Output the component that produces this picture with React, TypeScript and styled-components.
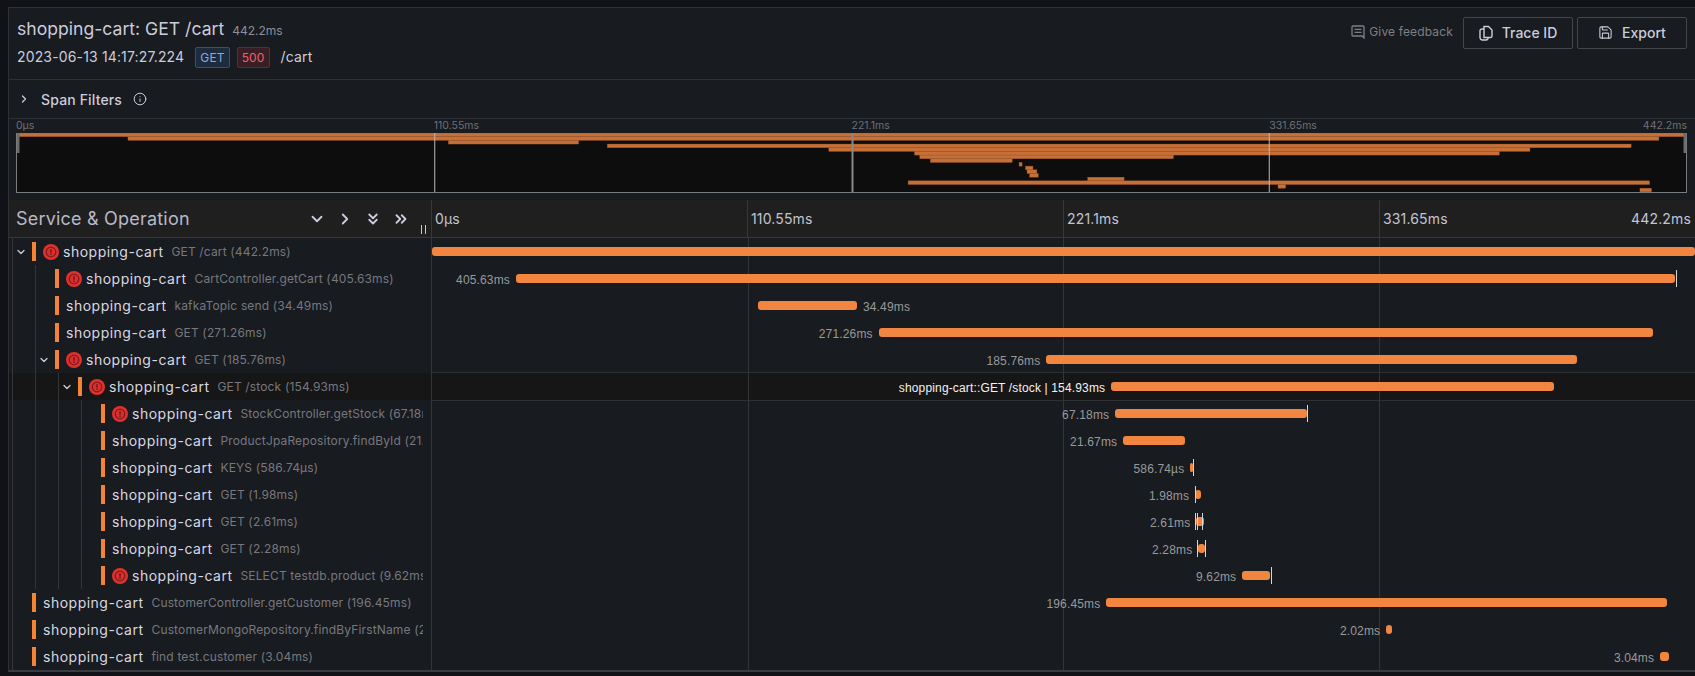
import styled, { createGlobalStyle } from "styled-components";
import { ChevronDown, ChevronRight, ChevronsDown, ChevronsRight, Info, Save } from "lucide-react";

const TOTAL = 442.2;
const pct = (ms: number) => `${(ms / TOTAL) * 100}%`;

type Span = {
    depth: number;
    op: string;
    start: number;
    duration: number;
    width?: number;
    open?: boolean;
    error?: boolean;
    noLabel?: boolean;
    labelRight?: boolean;
    selected?: boolean;
    logs?: number[];
};

const spans: Span[] = [
    { depth: 0, op: "GET /cart (442.2ms)", start: 0, duration: 442.2, open: true, error: true, noLabel: true },
    { depth: 1, op: "CartController.getCart (405.63ms)", start: 29.4, duration: 405.63, error: true, logs: [435.4] },
    { depth: 1, op: "kafkaTopic send (34.49ms)", start: 114.3, duration: 34.49, labelRight: true },
    { depth: 1, op: "GET (271.26ms)", start: 156.4, duration: 271.26 },
    { depth: 1, op: "GET (185.76ms)", start: 215.1, duration: 185.76, open: true, error: true },
    { depth: 2, op: "GET /stock (154.93ms)", start: 237.8, duration: 154.93, open: true, error: true, selected: true },
    { depth: 3, op: "StockController.getStock (67.18ms)", start: 239.2, duration: 67.18, error: true, logs: [306.3] },
    { depth: 3, op: "ProductJpaRepository.findById (21.67ms)", start: 242, duration: 21.67 },
    { depth: 3, op: "KEYS (586.74µs)", start: 265.5, duration: 0.587, width: 3, logs: [266.4] },
    { depth: 3, op: "GET (1.98ms)", start: 267.2, duration: 1.98, logs: [267] },
    { depth: 3, op: "GET (2.61ms)", start: 267.6, duration: 2.61, logs: [267, 267.9, 269.7] },
    { depth: 3, op: "GET (2.28ms)", start: 268.3, duration: 2.28, logs: [267.9, 270.6] },
    { depth: 3, op: "SELECT testdb.product (9.62ms)", start: 283.7, duration: 9.62, error: true, logs: [293.6] },
    { depth: 0, op: "CustomerController.getCustomer (196.45ms)", start: 236.1, duration: 196.45 },
    { depth: 0, op: "CustomerMongoRepository.findByFirstName (2.02ms)", start: 334.1, duration: 2.02 },
    { depth: 0, op: "find test.customer (3.04ms)", start: 430, duration: 3.04 },
];

const durationOf = (op: string) => op.slice(op.lastIndexOf("(") + 1, -1);

const ErrorIcon = () => (
    <ErrorSvg viewBox="0 0 16 16">
        <circle cx="8" cy="8" r="8" fill="#e0312f" />
        <circle cx="8" cy="8" r="4.8" fill="#d92f2e" stroke="#841b1f" strokeWidth="1.3" />
        <rect x="7.3" y="5.2" width="1.4" height="3.6" fill="#6f1519" />
        <rect x="7.3" y="9.6" width="1.4" height="1.4" fill="#6f1519" />
    </ErrorSvg>
);

const FeedbackIcon = () => (
    <svg width="14" height="14" viewBox="0 0 14 14" fill="none" stroke="#7e8087" strokeWidth="1.3">
        <path d="M2 1h10a1 1 0 0 1 1 1v9.5V13l-2-2H2a1 1 0 0 1-1-1V2a1 1 0 0 1 1-1z" />
        <path d="M3.5 4.3h7M3.5 7.3h7" />
    </svg>
);

const CopyIcon = () => (
    <svg width="14" height="16" viewBox="0 0 14 16" fill="none" stroke="#ccccdc" strokeWidth="1.4">
        <path d="M5 1.5h4.5l3.5 3.5v6a1.5 1.5 0 0 1-1.5 1.5H5V1.5z" />
        <path d="M5 4H3a2 2 0 0 0-2 2v6.5A2.5 2.5 0 0 0 3.5 15H7a2 2 0 0 0 2-2.500" />
    </svg>
);

const MiniMap = () => {
    const w = 1669;
    const h = 59;
    const rowH = 3.68;
    return (
        <MiniSvg viewBox={`0 0 ${w} ${h}`} preserveAspectRatio="none">
            {spans.map((s, i) => (
                <rect
                    key={i}
                    x={(s.start / TOTAL) * w}
                    y={i * rowH}
                    width={Math.max((s.duration / TOTAL) * w, 3)}
                    height={rowH}
                    fill="#c66f36"
                    stroke="#a05c2e"
                    strokeWidth="0.35"
                />
            ))}
            {[0.25, 0.5, 0.75].map((f) => (
                <rect key={f} x={f * w} y="0" width={f === 0.5 ? 2 : 1} height={h} fill={f === 0.5 ? "#8a8a8a" : "#b9b9b9"} />
            ))}
            <rect x="0" y="0" width="2.500" height="20" fill="#6c6c6c" />
            <rect x={w - 2.5} y="0" width="2.500" height="20" fill="#6c6c6c" />
        </MiniSvg>
    );
};

export default function App() {
    return (
        <>
            <GlobalStyle />
            <Panel>
                <Header>
                    <div>
                        <TitleLine>
                            <Title>shopping-cart: GET /cart</Title>
                            <TotalTime>442.2ms</TotalTime>
                        </TitleLine>
                        <MetaLine>
                            <StartTime>2023-06-13 14:17:27.224</StartTime>
                            <Badge $tone="blue">GET</Badge>
                            <Badge $tone="red">500</Badge>
                            <Path>/cart</Path>
                        </MetaLine>
                    </div>
                    <Actions>
                        <Feedback>
                            <FeedbackIcon />
                            Give feedback
                        </Feedback>
                        <Button>
                            <CopyIcon />
                            Trace ID
                        </Button>
                        <Button>
                            <Save size={15} strokeWidth={1.7} />
                            Export
                        </Button>
                    </Actions>
                </Header>

                <Filters>
                    <ChevronRight size={12} strokeWidth={2.6} color="#ccccdc" />
                    <FiltersLabel>Span Filters</FiltersLabel>
                    <Info size={14} strokeWidth={1.7} color="#ccccdc" />
                </Filters>

                <MiniBlock>
                    <MiniLabels>
                        <span>0µs</span>
                        <span>110.55ms</span>
                        <span>221.1ms</span>
                        <LastTick>
                            <span>331.65ms</span>
                            <span>442.2ms</span>
                        </LastTick>
                    </MiniLabels>
                    <MiniMap />
                </MiniBlock>

                <Table>
                    <ColumnHead>
                        <ServiceHead>
                            <ServiceTitle>Service &amp; Operation</ServiceTitle>
                            <HeadIcons>
                                <ChevronDown size={18} strokeWidth={2.4} />
                                <ChevronRight size={18} strokeWidth={2.4} />
                                <ChevronsDown size={18} strokeWidth={2.4} />
                                <ChevronsRight size={18} strokeWidth={2.4} />
                            </HeadIcons>
                            <Resizer />
                        </ServiceHead>
                        <TimeHead>
                            <TimeTick>0µs</TimeTick>
                            <TimeTick>110.55ms</TimeTick>
                            <TimeTick>221.1ms</TimeTick>
                            <TimeTick $last>
                                <span>331.65ms</span>
                                <span>442.2ms</span>
                            </TimeTick>
                        </TimeHead>
                    </ColumnHead>

                    {spans.map((s, i) => (
                        <Row key={i} $selected={s.selected}>
                            <NameCell>
                                <NameInner>
                                    {Array.from({ length: s.depth + 1 }).map((_, g) => (
                                        <Guide key={g} $last={g === s.depth}>
                                            {g === s.depth && s.open && <ChevronDown size={12} strokeWidth={2.6} color="#ccccdc" />}
                                        </Guide>
                                    ))}
                                    <ColorMark />
                                    {s.error && <ErrorIcon />}
                                    <ServiceName>shopping-cart</ServiceName>
                                    <OpName>{s.op}</OpName>
                                </NameInner>
                            </NameCell>
                            <Track $selected={s.selected}>
                                <Bar style={{ left: pct(s.start), width: s.width ?? pct(s.duration) }}>
                                    {!s.noLabel && (
                                        <BarLabel $right={s.labelRight} $selected={s.selected}>
                                            {s.selected ? `shopping-cart::${s.op.split(" (")[0]} | ${durationOf(s.op)}` : durationOf(s.op)}
                                        </BarLabel>
                                    )}
                                </Bar>
                                {s.logs?.map((l) => (
                                    <LogTick key={l} style={{ left: pct(l) }} />
                                ))}
                            </Track>
                        </Row>
                    ))}
                </Table>
            </Panel>
        </>
    );
}

const GlobalStyle = createGlobalStyle`
    html, body {
        margin: 0;
        height: 100%;
        background: #111217;
        overflow: hidden;
    }
    * {
        box-sizing: border-box;
    }
    body {
        font-family: Inter, "Liberation Sans", sans-serif;
        color: #ccccdc;
        letter-spacing: 0.15px;
    }
`;

const Panel = styled.div`
    margin: 7px 0 0 8px;
    height: 665px;
    background: #181b1f;
    border: 1px solid #2e3035;
    border-right: 0;
    border-bottom-width: 2px;
    border-bottom-color: #3a3c41;
`;

const Header = styled.header`
    height: 72px;
    padding: 8px 8px 0;
    display: flex;
    justify-content: space-between;
    border-bottom: 1px solid #2e3035;
`;

const TitleLine = styled.div`
    display: flex;
    align-items: baseline;
    gap: 8px;
    height: 26px;
`;

const Title = styled.h1`
    margin: 0;
    font-size: 17.6px;
    font-weight: 400;
    line-height: 26px;
    letter-spacing: 0;
`;

const TotalTime = styled.span`
    font-size: 12px;
    letter-spacing: 0;
    color: #8e8f96;
`;

const MetaLine = styled.div`
    display: flex;
    align-items: center;
    gap: 7px;
    margin-top: 3px;
    height: 22px;
    font-size: 14px;
`;

const StartTime = styled.span`
    margin-right: 4px;
`;

const Badge = styled.span<{ $tone: "blue" | "red" }>`
    height: 21px;
    margin-top: 3px;
    padding: 0 4px;
    display: flex;
    align-items: center;
    font-size: 12px;
    border-radius: 2px;
    border: 1px solid ${(p) => (p.$tone === "blue" ? "#1555ad" : "#8b1825")};
    background: ${(p) => (p.$tone === "blue" ? "#1e2a3e" : "#3a1e25")};
    color: ${(p) => (p.$tone === "blue" ? "#87a9e0" : "#e8636f")};
`;

const Path = styled.span`
    margin-left: 4px;
`;

const Actions = styled.div`
    display: flex;
    align-items: flex-start;
    gap: 4px;
    margin-top: 1px;
`;

const Feedback = styled.a`
    display: flex;
    align-items: center;
    gap: 4px;
    height: 29px;
    margin-right: 6px;
    font-size: 12px;
    color: #7e8087;
`;

const Button = styled.button`
    width: 110px;
    height: 32px;
    display: flex;
    align-items: center;
    justify-content: center;
    gap: 9px;
    padding: 0 0 1px;
    background: transparent;
    border: 1px solid #44464c;
    border-radius: 2px;
    color: #ccccdc;
    font: 500 14px Inter, sans-serif;
`;

const Filters = styled.div`
    height: 39px;
    padding-left: 9px;
    display: flex;
    align-items: center;
    border-bottom: 1px solid #2e3035;
`;

const FiltersLabel = styled.span`
    margin: 0 11px 0 11px;
    font-size: 14px;
    font-weight: 500;
`;

const MiniBlock = styled.div`
    height: 81px;
    padding: 0 8px 0 7px;
`;

const MiniLabels = styled.div`
    height: 14px;
    display: grid;
    grid-template-columns: repeat(4, 1fr);
    font-size: 10.500px;
    line-height: 14px;
    color: #6f7076;
    letter-spacing: 0;
`;

const LastTick = styled.div`
    display: flex;
    justify-content: space-between;
`;

const MiniSvg = styled.svg`
    display: block;
    width: 100%;
    height: 60px;
    background: #0d0d0d;
    border: solid #7b7b7b;
    border-width: 0 1px 1px 1px;
`;

const Table = styled.div`
    display: flex;
    flex-direction: column;
`;

const ColumnHead = styled.div`
    height: 38px;
    display: flex;
    background: #1f1f20;
    border-bottom: 1px solid #37383c;
`;

const ServiceHead = styled.div`
    position: relative;
    width: 422px;
    flex: none;
    padding-left: 7px;
    display: flex;
    align-items: center;
`;

const ServiceTitle = styled.h2`
    margin: 0;
    font-size: 18px;
    font-weight: 400;
    color: #b8b8c6;
    letter-spacing: 0.2px;
`;

const HeadIcons = styled.div`
    margin-left: auto;
    margin-right: 21px;
    display: flex;
    gap: 10px;
    color: #ccccdc;
`;

const Resizer = styled.i`
    position: absolute;
    right: 5px;
    bottom: 3px;
    width: 5px;
    height: 9px;
    border: solid #c9c9c9;
    border-width: 0 1px;
`;

const TimeHead = styled.div`
    flex: 1;
    display: grid;
    grid-template-columns: repeat(4, 1fr);
`;

const TimeTick = styled.div<{ $last?: boolean }>`
    display: flex;
    justify-content: ${(p) => (p.$last ? "space-between" : "flex-start")};
    align-items: center;
    padding: 0 4px 0 3px;
    border-left: 1px solid #37383c;
    font-size: 14px;
    color: #c4c4d0;
`;

const Row = styled.div<{ $selected?: boolean }>`
    height: 27px;
    display: flex;
    background: ${(p) => (p.$selected ? "#161616" : "transparent")};
`;

const NameCell = styled.div`
    width: 422px;
    flex: none;
    padding: 0 8px 0 3px;
`;

const NameInner = styled.div`
    height: 100%;
    display: flex;
    align-items: center;
    overflow: hidden;
    white-space: nowrap;
`;

const Guide = styled.div<{ $last?: boolean }>`
    flex: none;
    width: ${(p) => (p.$last ? "20px" : "23px")};
    align-self: stretch;
    display: flex;
    align-items: center;
    justify-content: center;
    padding-right: ${(p) => (p.$last ? "3px" : "0")};
    border-left: 1px solid #33353a;
`;

const ColorMark = styled.span`
    flex: none;
    width: 4px;
    height: 19px;
    margin-right: 7px;
    background: #f58334;
`;

const ErrorSvg = styled.svg`
    flex: none;
    width: 16px;
    height: 16px;
    margin-right: 4px;
`;

const ServiceName = styled.span`
    font-size: 14px;
    color: #d8d8e2;
    letter-spacing: 0.5px;
`;

const OpName = styled.span`
    margin-left: 8px;
    font-size: 12px;
    color: #77787f;
`;

const Track = styled.div<{ $selected?: boolean }>`
    position: relative;
    flex: 1;
    border-left: 1px solid #33353a;
    background-image:
        linear-gradient(#33353a, #33353a),
        linear-gradient(#33353a, #33353a),
        linear-gradient(#33353a, #33353a);
    background-size: 1px 100%;
    background-repeat: no-repeat;
    background-position: 25% 0, 50% 0, 75% 0;
    box-shadow: ${(p) => (p.$selected ? "0 -1px 0 #2f3034, 0 1px 0 #2f3034" : "none")};
`;

const Bar = styled.div`
    position: absolute;
    top: 9px;
    height: 9px;
    min-width: 3px;
    border-radius: 3px;
    background: #f2853f;
`;

const BarLabel = styled.span<{ $right?: boolean; $selected?: boolean }>`
    position: absolute;
    top: -1px;
    ${(p) => (p.$right ? "left: calc(100% + 6px);" : "right: calc(100% + 6px);")}
    font: 12px/14px "Liberation Sans", sans-serif;
    white-space: nowrap;
    color: ${(p) => (p.$selected ? "#f2f2f2" : "#9a9a9a")};
`;

const LogTick = styled.i`
    position: absolute;
    top: 5px;
    width: 1px;
    height: 17px;
    background: #d6d6d6;
`;
